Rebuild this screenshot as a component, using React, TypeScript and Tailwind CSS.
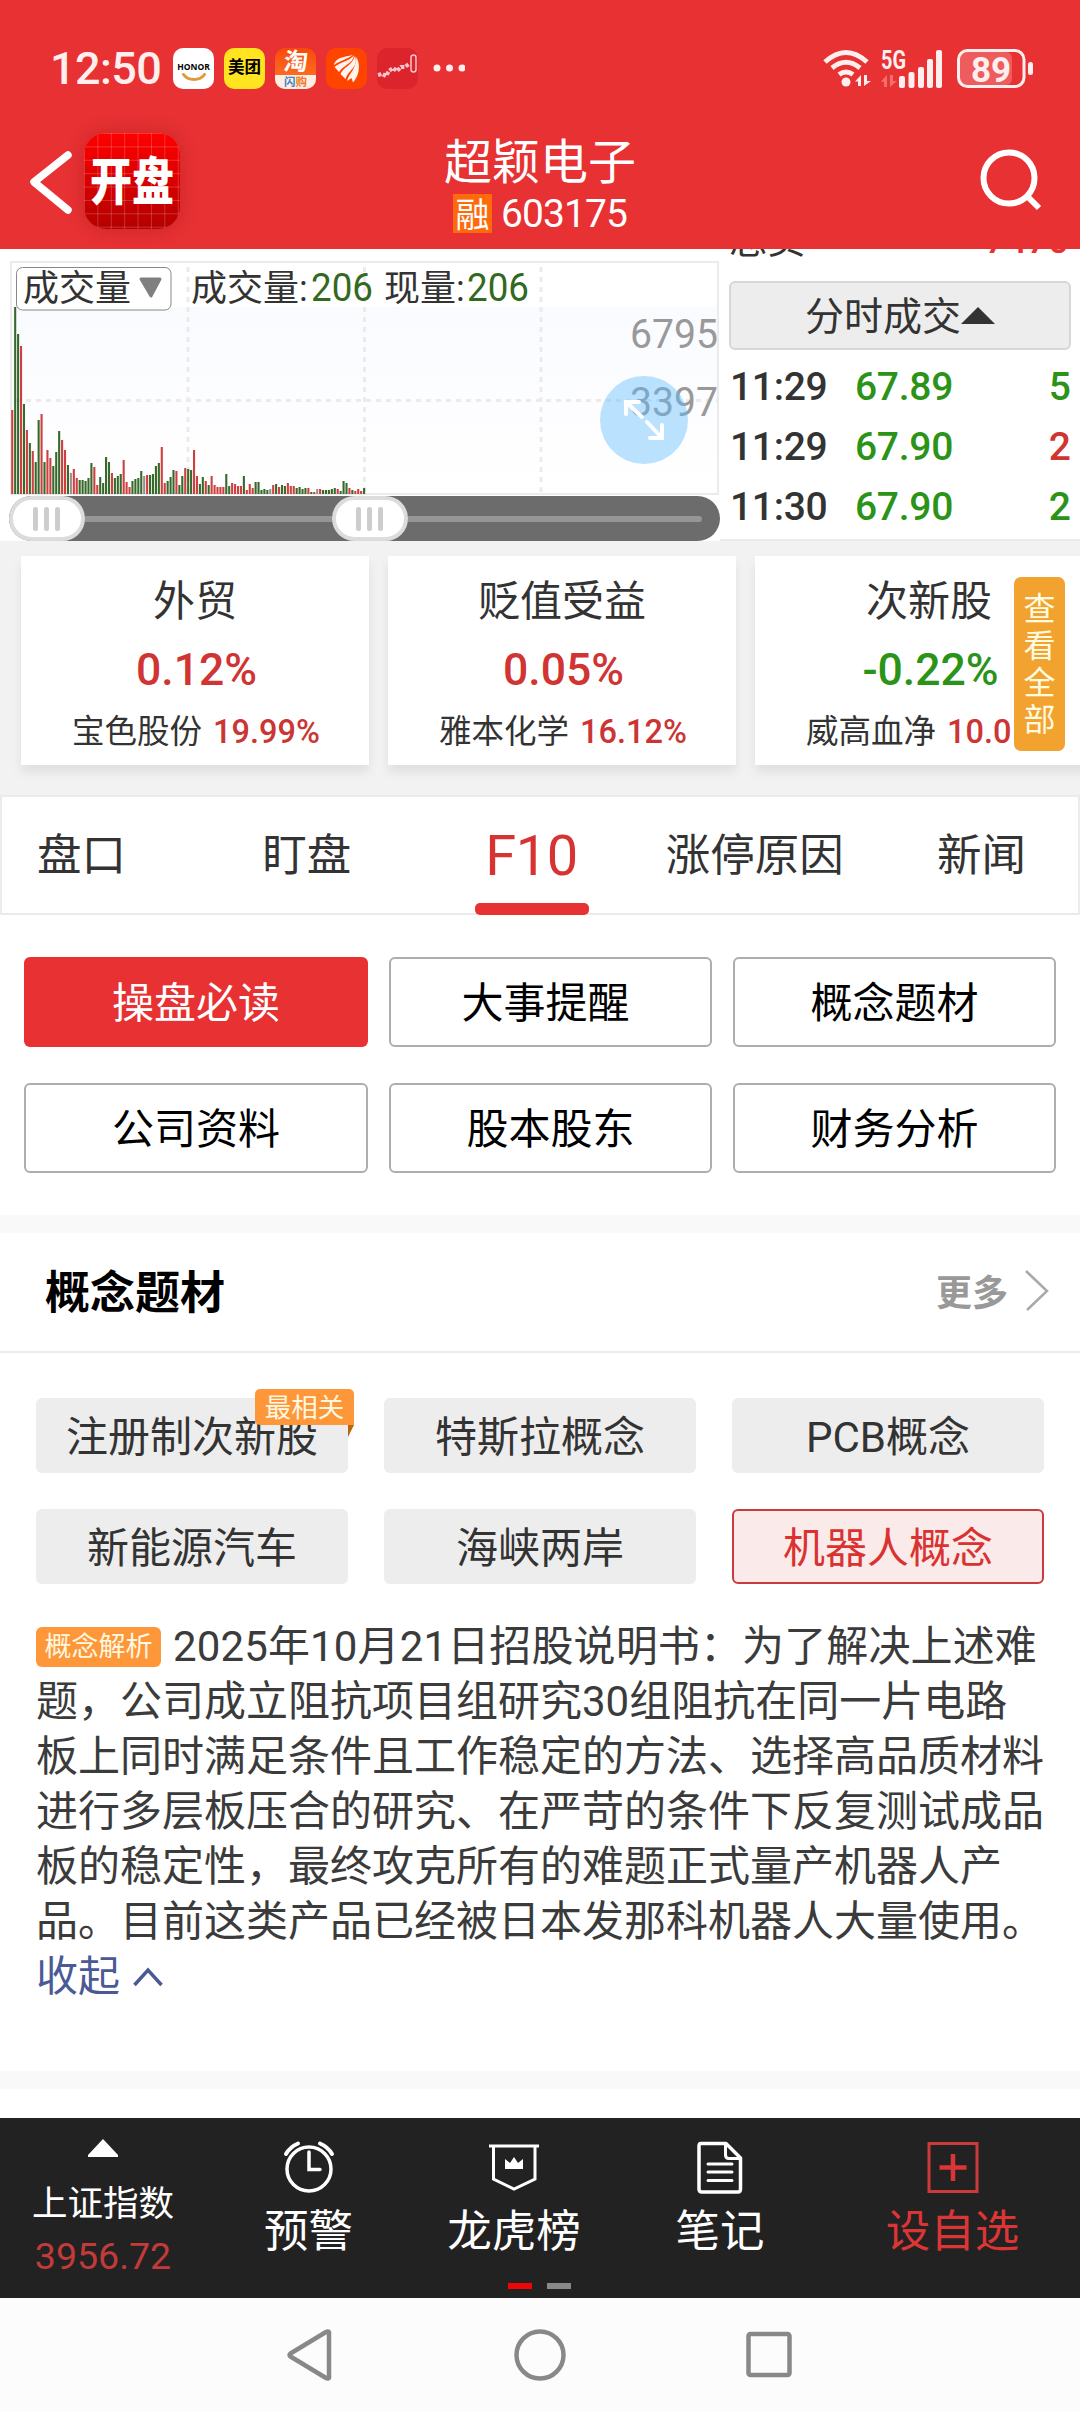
import { Fragment } from "react";
import clsx from "clsx";

// volume bar heights in px, suffix: r = up, g = down, n = flat
const VOLUMES =
  "84r 187g 160g 148r 90g 64r 51g 43r 32g 74g 80r 32g 44r 36r 28g 42g 63g 54r 44r 29g 21n 25r 16r 14g 14g 13g 16g 31g 27r 9r 17g 11g 37g 32g 21r 16g 18g 20g 34r 12r 7r 13g 15g 16g 23g 18n 19r 19g 20g 28g 31g 47r 11r 13g 17g 24g 23r 9g 18g 26r 25g 24g 44r 18r 10g 17g 13r 9g 18r 9r 7r 7r 7r 20g 8g 11r 10r 8r 8r 18g 4r 10r 6r 12g 12g 4g 5g 4g 5n 9r 10g 7r 9g 8g 11r 8r 8r 6g 7g 5g 6g 6r 2g 2r 5n 5r 4g 4g 4g 5g 6g 5r 3g 13g 11g 6r 4g 3r 5r 3r 6g";

const BAR_COLORS: Record<string, string> = { r: "#cf3f40", g: "#36692a", n: "#9a8f90" };

const TRADES = [
  { time: "11:29", price: "67.89", volume: 5, up: false },
  { time: "11:29", price: "67.90", volume: 2, up: true },
  { time: "11:30", price: "67.90", volume: 2, up: false },
];

const SECTORS = [
  { name: "外贸", change: "0.12%", up: true, stock: "宝色股份", stockChange: "19.99%" },
  { name: "贬值受益", change: "0.05%", up: true, stock: "雅本化学", stockChange: "16.12%" },
  { name: "次新股", change: "-0.22%", up: false, stock: "威高血净", stockChange: "10.0" },
];

const MENU = ["操盘必读", "大事提醒", "概念题材", "公司资料", "股本股东", "财务分析"];
const CONCEPTS = ["注册制次新股", "特斯拉概念", "PCB概念", "新能源汽车", "海峡两岸", "机器人概念"];

const ANALYSIS = [
  "2025年10月21日招股说明书：为了解决上述难",
  "题，公司成立阻抗项目组研究30组阻抗在同一片电路",
  "板上同时满足条件且工作稳定的方法、选择高品质材料",
  "进行多层板压合的研究、在严苛的条件下反复测试成品",
  "板的稳定性，最终攻克所有的难题正式量产机器人产",
  "品。目前这类产品已经被日本发那科机器人大量使用。",
];

function StatusBar() {
  return (
    <div className="flex h-[136px] items-center justify-between pl-[50px] pr-[46px] text-white">
      <div className="flex items-center">
        <span className="w-[123px] text-[45px] font-medium leading-none tracking-[-0.600px] text-[#ffeeee]">12:50</span>
        <div className="flex gap-[10px]">
          <div className="flex size-[41px] flex-col items-center rounded-[10px] bg-white pt-[12px]">
            <span className="font-['Open_Sans'] text-[8.500px] font-bold leading-[13px] text-black">HONOR</span>
            <svg width="24" height="9" viewBox="0 0 24 9" fill="none">
              <path d="M1.500 1.500C6 8 18 8 22.500 1.500" stroke="#e09a3e" strokeWidth="3" strokeLinecap="round" />
            </svg>
          </div>
          <div className="flex size-[41px] items-center justify-center rounded-[10px] bg-[#ffe41f] pt-[1px] text-[16.500px] font-bold text-black">
            美团
          </div>
          <div className="flex size-[41px] flex-col items-center overflow-hidden rounded-[10px] bg-linear-to-b from-[#f9480a] to-[#fd7a28]">
            <span className="h-[27px] -skew-x-6 text-[24px] font-bold leading-[28px]">淘</span>
            <span className="h-[14px] w-full bg-[#fdeee2] text-center text-[11.500px] font-bold leading-[14px] text-[#f07a2a]">
              <span className="text-[#3d83c8]">闪</span>购
            </span>
          </div>
          <div className="size-[41px] rounded-[10px] bg-[#ff4400]">
            <svg width="41" height="41" viewBox="0 0 41 41" fill="#fff4ee">
              <path d="M8 16C11 9 18 9 27 7C22 11 15 12 8 17Z" />
              <path d="M8.500 19C15 14 23 13 28 7.500C27 16 17 17 13 24Z" />
              <path d="M14.500 26C17 19 26 18 29 8C33 19 23 21 19.500 31Z" />
              <path d="M21 33C23 25 30 22 30.500 9C35.500 19 32 29 27 34.500L25.500 30Z" />
            </svg>
          </div>
          <div className="size-[41px] rounded-[10px] bg-[#dc242c]">
            <svg width="41" height="41" viewBox="0 0 41 41" fill="none" stroke="#f9c4c8" strokeWidth="1.500">
              <path d="M1 27L5 26L9 28L12 23L16 20L20 23L24 19L28 19L32 16" strokeDasharray="3.500 1.500" strokeWidth="4" />
              <rect x="34" y="7" width="5" height="17" rx="2.500" />
            </svg>
          </div>
        </div>
        <svg className="ml-[15px]" width="32" height="8" fill="#ffeeee">
          <circle cx="4" cy="4" r="3.500" />
          <circle cx="16.500" cy="4" r="3.500" />
          <circle cx="29" cy="4" r="3.500" />
        </svg>
      </div>

      <svg width="212" height="42" viewBox="822 46 212 42" fill="none">
        <g stroke="#ffeeee" strokeWidth="5">
          <path d="M825 61Q846 42 867 61" />
          <path d="M832 67Q846 55.500 860 67" />
          <path d="M839 73.500Q846 68.500 853 73.500" />
        </g>
        <circle cx="846" cy="81" r="4.500" fill="#ffeeee" />
        <path d="M855 80.500L861 74V85H858V80.500ZM864 74V85L871 80H867V74Z" fill="#ffeeee" />
        <path d="M881 80.500L887 74V86H884V81ZM890 74V86L897 80H893V74Z" fill="#f46e6e" />
        <text x="881" y="67.500" fill="#ffeeee" fontSize="25" fontWeight="700" fontFamily="Roboto, sans-serif" textLength="25" lengthAdjust="spacingAndGlyphs">
          5G
        </text>
        <g fill="#ffeeee">
          <rect x="899" y="75" width="6" height="12" rx="2" />
          <rect x="908.500" y="71" width="6" height="16" rx="2" />
          <rect x="918" y="66" width="6" height="21" rx="2" />
          <rect x="927" y="58" width="6" height="29" rx="2" />
          <rect x="936" y="49" width="6" height="38" rx="2" />
        </g>
        <rect x="959" y="51" width="53" height="33" rx="6" fill="#ee5c5d" />
        <rect x="958.500" y="49.500" width="65.500" height="36" rx="9" stroke="#ffeeee" strokeWidth="3" />
        <rect x="1028" y="61" width="5" height="13" rx="2.500" fill="#ffeeee" />
        <text x="991" y="80.500" fill="#ffeeee" fontSize="35" fontWeight="700" fontFamily="Roboto, sans-serif" textAnchor="middle">
          89
        </text>
      </svg>
    </div>
  );
}

function TitleBar() {
  return (
    <div className="flex h-[113px] items-start justify-between pl-[29px] pr-[36px] text-white">
      <div className="flex w-[160px] items-center">
        <svg width="55" height="90" fill="none" stroke="#fff" strokeWidth="7.500" strokeLinecap="round" strokeLinejoin="round">
          <path d="M39 17L5 44L39 72" />
        </svg>
        <div className="-mt-[3px] flex size-[96px] shrink-0 items-center justify-center overflow-hidden rounded-[22px] bg-linear-to-b from-[#ff0000] to-[#b40000] shadow-[0_0_18px_rgba(120,0,0,0.25)]">
          <div className="flex size-full items-center justify-center bg-[linear-gradient(to_right,rgba(255,255,255,0.2)_1px,transparent_1px),linear-gradient(to_bottom,rgba(255,255,255,0.2)_1px,transparent_1px)] bg-[size:13.400px_13.400px] pt-[3px]">
            <span className="scale-y-[1.22] text-[42px] font-black leading-none">开盘</span>
          </div>
        </div>
      </div>
      <div className="flex flex-col items-center pl-[7px] pt-[1px]">
        <div className="text-[48px] leading-[52px]">超颖电子</div>
        <div className="mt-[4px] flex items-center gap-[9px]">
          <span className="flex size-[39px] items-center justify-center bg-[#ff6a0c] pt-[2px] text-[34px] leading-none">融</span>
          <span className="pt-[2px] text-[39px] leading-[39px] tracking-[-0.900px]">603175</span>
        </div>
      </div>
      <div className="flex w-[160px] justify-end">
        <svg width="64" height="90" fill="none" stroke="#fff" strokeWidth="6">
          <circle cx="29" cy="42" r="25.500" />
          <path d="M47 60L59 72" />
        </svg>
      </div>
    </div>
  );
}

function VolumeChart() {
  const bars = VOLUMES.split(" ");
  return (
    <svg width="720" height="247" viewBox="0 249 720 247" className="block">
      <defs>
        <linearGradient id="plot" x1="0" y1="0" x2="0" y2="1">
          <stop offset="0" stopColor="#fafbff" />
          <stop offset="1" stopColor="#ffffff" />
        </linearGradient>
      </defs>
      <rect x="12" y="307" width="705" height="187" fill="url(#plot)" />
      <rect x="11" y="262" width="707" height="232" fill="none" stroke="#ebebeb" strokeWidth="2" />
      <g stroke="#ebebeb" strokeWidth="3" strokeDasharray="5 5">
        <path d="M188 267V494M364.500 267V494M541 267V494M16 400.500H717" />
      </g>
      {bars.map((bar, i) => {
        const height = parseInt(bar, 10);
        return (
          <rect
            key={i}
            x={11.2 + i * 2.932}
            y={494 - height}
            width={2.1}
            height={height}
            fill={BAR_COLORS[bar.slice(-1)]}
          />
        );
      })}
      <rect x="16.500" y="267.500" width="154.500" height="42.500" rx="6" fill="#fff" stroke="#888" />
      <path d="M141 279H160L151 296Z" fill="#808080" stroke="#808080" strokeWidth="3" strokeLinejoin="round" />
      <g fontFamily="Roboto, 'Noto Sans CJK SC', sans-serif">
        <g fontSize="36" fill="#333">
          <text x="23" y="301">成交量</text>
          <text x="191" y="301">成交量:</text>
          <text x="384" y="301">现量:</text>
        </g>
        <g fontSize="39" fill="#33691e">
          <text x="311" y="301" textLength="62" lengthAdjust="spacingAndGlyphs">206</text>
          <text x="467" y="301" textLength="62" lengthAdjust="spacingAndGlyphs">206</text>
        </g>
        <g fontSize="41" fill="#999">
          <text x="630" y="347.500" textLength="88" lengthAdjust="spacingAndGlyphs">6795</text>
          <text x="630" y="415.500" textLength="88" lengthAdjust="spacingAndGlyphs">3397</text>
        </g>
      </g>
      <circle cx="644" cy="420" r="44" fill="rgba(93,188,255,0.42)" />
      <path
        d="M642 417L626 402M639 402H626V414M647 422L662 438M650 438H662V425"
        fill="none"
        stroke="#fff"
        strokeWidth="4"
        strokeLinecap="round"
      />
    </svg>
  );
}

function Handle() {
  return (
    <div className="flex h-[45px] w-[76px] items-center justify-center gap-[6px] rounded-full border-4 border-[#dcdcdc] bg-white pr-[2px]">
      <i className="h-[24px] w-[5px] rounded-full bg-[#cdcdcd]" />
      <i className="h-[24px] w-[5px] rounded-full bg-[#cdcdcd]" />
      <i className="h-[24px] w-[5px] rounded-full bg-[#cdcdcd]" />
    </div>
  );
}

function RangeSlider() {
  return (
    <div className="ml-[9px] flex h-[45px] items-center rounded-full bg-[#6c6c6c] pr-[18px]">
      <Handle />
      <div className="h-[6px] w-[247px] bg-[#969696]" />
      <Handle />
      <div className="h-[6px] flex-1 rounded-r-full bg-[#969696]" />
    </div>
  );
}

function TradeList() {
  return (
    <div className="flex flex-1 flex-col overflow-hidden border-b-2 border-[#ececec] px-[9px]">
      <div className="-mt-[32px] flex h-[64px] shrink-0 items-start justify-between pr-[2px]">
        <span className="mt-[3px] text-[38px] leading-[40px] text-[#333]">总卖</span>
        <span className="mt-[5px] text-[37px] font-medium leading-[38px] text-[#e73133]">7470</span>
      </div>
      <div className="flex h-[69px] shrink-0 items-center justify-center rounded-[6px] border-2 border-[#d6d6d6] bg-[#ededed]">
        <span className="pt-[3px] text-[39px] leading-none text-[#333]">分时成交</span>
        <svg width="34" height="17" fill="#333">
          <path d="M0 17L17 0L34 17Z" />
        </svg>
      </div>
      <div className="mt-[7px] text-[39px] font-medium leading-[60px]">
        {TRADES.map((trade, i) => (
          <div key={i} className="flex h-[60px]">
            <span className="w-[126px] pl-[1px] tracking-[-0.300px] text-[#333]">{trade.time}</span>
            <span className="tracking-[-0.300px] text-[#2b9318]">{trade.price}</span>
            <span className={clsx("ml-auto", trade.up ? "text-[#d03433]" : "text-[#2b9318]")}>{trade.volume}</span>
          </div>
        ))}
      </div>
    </div>
  );
}

function Sectors() {
  return (
    <div className="relative flex h-[254px] gap-[19px] overflow-hidden bg-[#f2f2f2] pl-[21px] pt-[15px]">
      {SECTORS.map((sector) => (
        <div
          key={sector.name}
          className="flex h-[209px] w-[348px] shrink-0 flex-col items-center whitespace-nowrap bg-white pt-[18px] shadow-[0_7px_10px_rgba(0,0,0,0.08)]"
        >
          <div className="text-[42px] leading-[56px] text-[#333]">{sector.name}</div>
          <div
            className={clsx(
              "mt-[10px] pl-[3px] text-[44.500px] font-medium leading-[60px]",
              sector.up ? "text-[#d03433]" : "text-[#2b9318]"
            )}
          >
            {sector.change}
          </div>
          <div className="mt-[7px] flex w-[246px] gap-[11px] leading-[50px]">
            <span className="text-[32.500px] text-[#333]">{sector.stock}</span>
            <span className="text-[32.500px] font-medium text-[#cb3534]">{sector.stockChange}</span>
          </div>
        </div>
      ))}
      <div className="absolute left-[1014px] top-[36px] flex h-[174px] w-[51px] flex-col items-center rounded-[7px] bg-[#f2a22e] pt-[14px] text-[32px] leading-[37px] text-[#fffbe0]">
        {"查看全部".split("").map((char) => (
          <span key={char}>{char}</span>
        ))}
      </div>
    </div>
  );
}

function Tabs() {
  return (
    <div className="flex h-[120px] items-center justify-between border-2 border-[#ebebeb] pl-[35px] pr-[52px] text-[44.500px] text-[#333]">
      <span className="pt-[3px]">盘口</span>
      <span className="ml-[43px] pt-[3px]">盯盘</span>
      <div className="relative ml-[30px] flex h-full w-[114px] items-center justify-center">
        <span className="pt-[2px] text-[56px] tracking-[-0.500px] text-[#d63332]">F10</span>
        <i className="absolute -bottom-[2px] left-0 h-[12px] w-[114px] rounded-[5px] bg-[#e73133]" />
      </div>
      <span className="-ml-[16px] pt-[3px]">涨停原因</span>
      <span className="pt-[3px]">新闻</span>
    </div>
  );
}

function Menu() {
  return (
    <div className="grid h-[300px] grid-cols-[344px_323px_323px] content-start gap-x-[21px] gap-y-[36px] pl-[24px] pt-[42px]">
      {MENU.map((item, i) => (
        <button
          key={item}
          type="button"
          className={clsx(
            "h-[90px] rounded-[6px] pt-[3px] text-[42px]",
            i === 0 ? "bg-[#e73133] text-white" : "border-2 border-[#adadad] text-black",
            i === 1 && "pr-[10px]"
          )}
        >
          {item}
        </button>
      ))}
    </div>
  );
}

function Concepts() {
  return (
    <section>
      <div className="flex h-[120px] items-center justify-between border-b-2 border-[#ebebeb] pl-[45px] pr-[30px]">
        <h2 className="pt-[3px] text-[45px] font-bold text-black">概念题材</h2>
        <div className="flex items-center text-[36px] font-bold text-[#999]">
          <span className="pt-[3px]">更多</span>
          <svg className="-mt-[2px] ml-[16px]" width="26" height="42" fill="none" stroke="#a9a9a9" strokeWidth="2.500">
            <path d="M2 1L23 21L3 40" />
          </svg>
        </div>
      </div>

      <div className="grid grid-cols-[312px_312px_312px] gap-x-[36px] gap-y-[36px] pl-[36px] pt-[45px]">
        {CONCEPTS.map((concept, i) => (
          <div
            key={concept}
            className={clsx(
              "relative flex h-[75px] items-center justify-center rounded-[6px] pt-[3px] text-[42px]",
              i === 5 ? "border-2 border-[#cb3b3d] bg-[#fbeaea] text-[#d93231]" : "bg-[#ededed] text-[#333]"
            )}
          >
            {concept}
            {i === 0 && (
              <>
                <span className="absolute -right-[6px] -top-[9px] h-[36px] w-[99px] rounded-[5px] rounded-br-none bg-[#fd9739] text-center text-[26.500px] leading-[37px] text-[#fff8e0]">
                  最相关
                </span>
                <svg className="absolute -right-[6px] top-[27px]" width="6" height="12" fill="#b8650c">
                  <path d="M0 0H6L0 12Z" />
                </svg>
              </>
            )}
          </div>
        ))}
      </div>

      <div className="h-[487px] pl-[36px] pt-[35px] text-[42px] leading-[55px] text-[#3b3b3b]">
        {ANALYSIS.map((line, i) => (
          <div key={i} className={clsx("flex h-[55px] items-center whitespace-nowrap", i === 0 && "tracking-[0.130px]")}>
            {i === 0 && (
              <span className="mr-[12px] h-[40px] w-[125px] rounded-[6px] bg-[#fd9739] text-center text-[27px] leading-[41px] tracking-normal text-[#fff8e0]">
                概念解析
              </span>
            )}
            {line}
          </div>
        ))}
        <div className="flex h-[55px] items-center text-[#4a5a94]">
          收起
          <svg className="ml-[13px]" width="30" height="20" fill="none" stroke="#4a5a94" strokeWidth="3.500">
            <path d="M1.500 18L15 3L28.500 18" />
          </svg>
        </div>
      </div>
    </section>
  );
}

function BottomBar() {
  const items = [
    {
      label: "预警",
      width: "w-[205px]",
      icon: (
        <svg width="52" height="54" fill="none" stroke="#fff" strokeWidth="3.500">
          <circle cx="26" cy="29" r="22" />
          <path d="M26 12V29.500H37" strokeLinecap="round" />
          <path d="M3 14Q7 7 15 3.500M49 14Q45 7 37 3.500" strokeWidth="4" strokeLinecap="round" />
        </svg>
      ),
    },
    {
      label: "龙虎榜",
      width: "w-[206px]",
      icon: (
        <svg width="52" height="54" fill="none" stroke="#fff" strokeWidth="3">
          <path d="M1 6H51M5.500 6V39L26 49L47 39V6" />
          <path d="M17 19L22 23L26 17L30 23L35 19V29H17Z" fill="#fff" stroke="none" />
        </svg>
      ),
    },
    {
      label: "笔记",
      width: "w-[206px]",
      icon: (
        <svg width="52" height="54" fill="none" stroke="#fff" strokeWidth="3.500" strokeLinejoin="round">
          <path d="M7 3.500H32L46.500 18V49Q46.500 52 44 52H8Q5 52 5 49V6Q5 3.500 7 3.500Z" />
          <path d="M31.500 4V15Q31.500 18.500 35 18.500H46" strokeWidth="3" />
          <path d="M14 24H38M14 32H38M14 40.500H38" strokeWidth="3" strokeLinecap="round" />
        </svg>
      ),
    },
  ];

  return (
    <div className="relative flex h-[180px] bg-[#222] text-white">
      <div className="flex w-[206px] flex-col items-center pt-[21px]">
        <svg width="30" height="18" fill="#fff">
          <path d="M15 0L30 16V18H0V16Z" />
        </svg>
        <span className="mt-[22px] text-[35.500px] leading-[50px]">上证指数</span>
        <span className="mt-[3px] text-[37.500px] leading-[48px] text-[#c13b3a]">3956.72</span>
      </div>
      {items.map((item) => (
        <div key={item.label} className={clsx("flex flex-col items-center pt-[22px]", item.width)}>
          {item.icon}
          <span className="mt-[8px] text-[44.500px] leading-[60px]">{item.label}</span>
        </div>
      ))}
      <div className="flex flex-1 flex-col items-center pl-[2px] pt-[22px] text-[#dc3535]">
        <svg width="54" height="54" fill="none" stroke="#cc3b3b" strokeWidth="3">
          <rect x="3" y="3.500" width="48" height="48" />
          <path d="M13.500 27.500H40.500M27 14V41" strokeWidth="4.500" stroke="#dc3535" />
        </svg>
        <span className="mt-[8px] text-[44.500px] leading-[60px]">设自选</span>
      </div>
      <div className="absolute bottom-[9px] left-[508px] flex gap-[15px]">
        <i className="h-[6px] w-[24px] bg-[#ee0606]" />
        <i className="h-[6px] w-[24px] bg-[#888]" />
      </div>
    </div>
  );
}

function SystemNav() {
  return (
    <div className="flex h-[114px] items-center justify-center gap-[178px] bg-[#fcfcfc]">
      <svg width="52" height="54" fill="none" stroke="#888" strokeWidth="4.500" strokeLinejoin="round">
        <path d="M45 4V50Q44 51 42 50L6.500 28.500Q4.500 27 6.500 25.500L42 4Q44 3 45 4Z" />
      </svg>
      <svg width="52" height="54" fill="none" stroke="#888" strokeWidth="4.500">
        <circle cx="26" cy="27" r="23.500" />
      </svg>
      <svg width="52" height="54" fill="none" stroke="#888" strokeWidth="4.500">
        <rect x="4.500" y="6" width="41" height="41" rx="2" />
      </svg>
    </div>
  );
}

export default function App() {
  const sections = [<Sectors />, <Tabs />, <Menu />];
  return (
    <div className="flex h-[2412px] w-[1080px] flex-col overflow-hidden bg-white font-[Roboto,'Noto_Sans_CJK_SC',sans-serif]">
      <header className="h-[249px] shrink-0 bg-[#e73133]">
        <StatusBar />
        <TitleBar />
      </header>
      <main className="h-[1869px] shrink-0 overflow-hidden">
        <div className="flex h-[292px]">
          <div className="w-[720px]">
            <VolumeChart />
            <RangeSlider />
          </div>
          <TradeList />
        </div>
        {sections.map((section, i) => (
          <Fragment key={i}>{section}</Fragment>
        ))}
        <div className="h-[18px] bg-[#f9f9f9]" />
        <Concepts />
        <div className="h-[18px] bg-[#f9f9f9]" />
      </main>
      <BottomBar />
      <SystemNav />
    </div>
  );
}
